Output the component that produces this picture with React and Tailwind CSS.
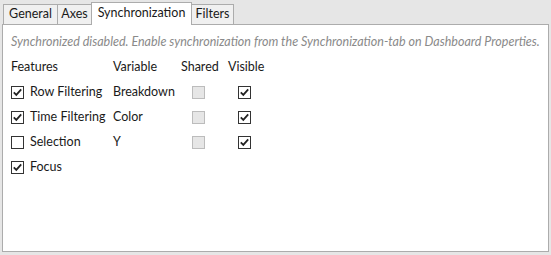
const font = { fontFamily: 'Lato, "Noto Sans", sans-serif' };

function Check({ checked, disabled }) {
    if (disabled) {
        return <div className="w-[13px] h-[13px] border border-[#bcbcbc] bg-[#e6e6e6]" />;
    }
    return (
        <div className="w-[13px] h-[13px] border border-[#333333] bg-white flex items-center justify-center">
            {checked && (
                <svg width="11" height="11" viewBox="0 0 11 11">
                    <path d="M1.8 5.4 L4.3 7.9 L9.2 2.4" fill="none" stroke="#222222" strokeWidth="1.8" />
                </svg>
            )}
        </div>
    );
}

const rows = [
    { feature: 'Row Filtering', on: true, variable: 'Breakdown' },
    { feature: 'Time Filtering', on: true, variable: 'Color' },
    { feature: 'Selection', on: false, variable: 'Y' },
    { feature: 'Focus', on: true, variable: null },
];

const tabs = [
    { name: 'General', w: 'w-[55px]' },
    { name: 'Axes', w: 'w-[35px]' },
    { name: 'Synchronization', w: 'w-[101px]', active: true },
    { name: 'Filters', w: 'w-[43px]' },
];

export default function App() {
    return (
        <div className="w-[551px] h-[255px] bg-[#e6e6e6] pt-[2px] px-[2px] pb-[3px] flex flex-col text-[12.5px] text-[#1a1a1a] whitespace-nowrap" style={font}>
            {/* Tabs */}
            <div className="flex items-end h-[22px] pl-[1px] relative z-10">
                {tabs.map((t, i) => (
                    <div
                        key={t.name}
                        className={`${t.w} ${i > 0 ? '-ml-px' : ''} flex items-center justify-center border border-b-0 border-[#acacac] ${t.active ? 'h-[23px] -mb-px bg-white relative z-10 pb-[2px]' : 'h-[20px] bg-[#f0f0f0]'}`}
                    >
                        {t.name}
                    </div>
                ))}
            </div>

            {/* Panel */}
            <div className="flex-1 border border-[#acacac] bg-white">
                <div className="pl-[8px] pt-[9px] h-[25px] leading-[16px] italic text-[#8a8a8a]">
                    Synchronized disabled. Enable synchronization from the Synchronization-tab on Dashboard Properties.
                </div>
                <div className="pl-[8px] mt-[5px]">
                    <div className="flex items-center h-[25px]">
                        <div className="w-[102px]">Features</div>
                        <div className="w-[68px]">Variable</div>
                        <div className="w-[47px]">Shared</div>
                        <div>Visible</div>
                    </div>
                    {rows.map(r => (
                        <div key={r.feature} className="flex items-center h-[25px]">
                            <div className="w-[102px] flex items-center">
                                <Check checked={r.on} />
                                <span className="ml-[6px] -mt-px">{r.feature}</span>
                            </div>
                            {r.variable && (
                                <>
                                    <div className="w-[68px]">{r.variable}</div>
                                    <div className="w-[47px] pl-[11px]"><Check disabled /></div>
                                    <div className="pl-[10px]"><Check checked /></div>
                                </>
                            )}
                        </div>
                    ))}
                </div>
            </div>
        </div>
    );
}
